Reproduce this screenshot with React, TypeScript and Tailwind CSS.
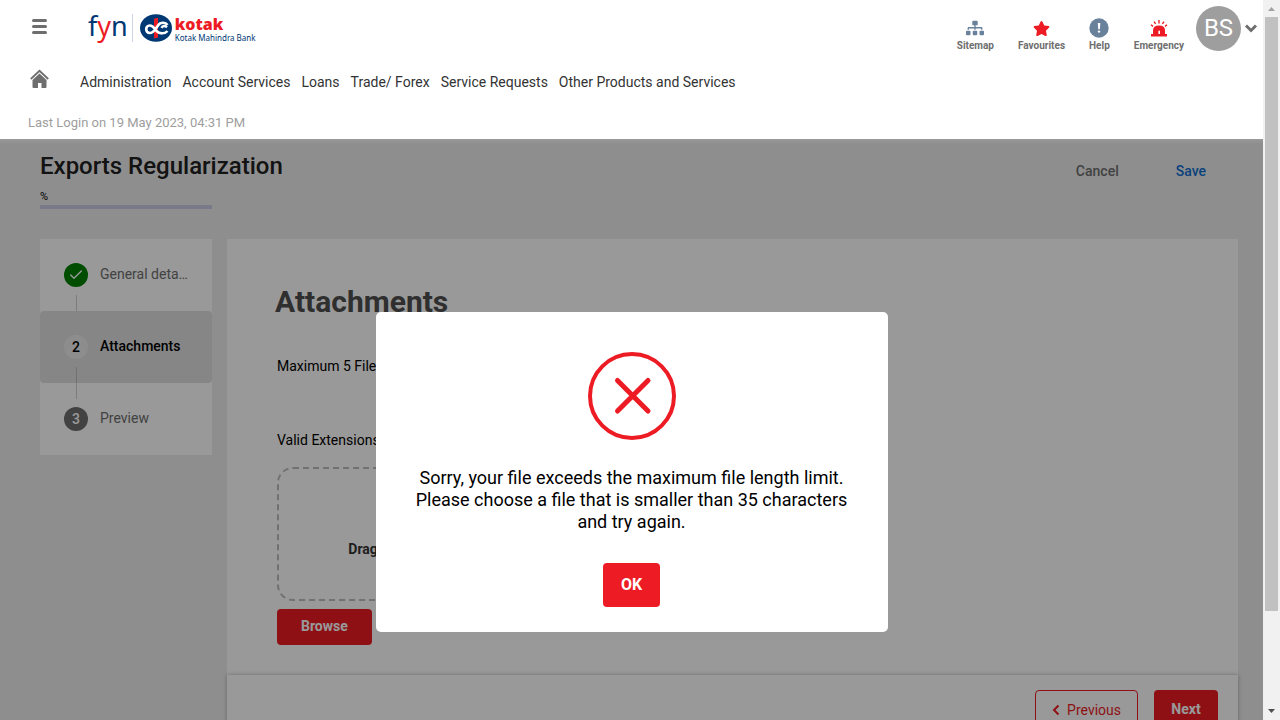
import { ReactNode } from "react";
import { Check } from "lucide-react";
import { FaSitemap, FaStar } from "react-icons/fa";

const menu = [
  "Administration",
  "Account Services",
  "Loans",
  "Trade/ Forex",
  "Service Requests",
  "Other Products and Services",
];

function Logo() {
  return (
    <a href="#home" aria-label="Kotak Mahindra Bank" className="flex h-8 items-center">
      <span className="pb-1 font-['Noto_Sans',sans-serif] text-[27px] leading-7 text-[#003874]">
        f<span className="text-[#ed1c24]">y</span>n
      </span>
      <span className="ml-1 h-7 w-px bg-[#ccd6e6]" />
      <svg viewBox="0 0 32 28" className="ml-[7px] h-7 w-8" aria-hidden="true">
        <ellipse cx="16" cy="14" rx="16" ry="13.8" fill="#003874" />
        <path d="M14 4.800 L18 3.800 V23.500 L14 24.500 Z" fill="#ed1c24" />
        <path
          d="M27.500 11 C25.500 8 20.500 8 18 11.500 C15.500 15 13.500 19 9.800 19 C5 19 5 11.500 9.800 11.500 C13.500 11.500 14.500 15 16.500 17 C19.500 20.200 25 20 27.500 17 M27 13.200 C25 11.400 22.800 11.600 21.500 13.800"
          fill="none"
          stroke="#fff"
          strokeWidth="2.600"
        />
      </svg>
      <span className="ml-[3px] flex flex-col gap-px">
        <span className="font-['Noto_Sans',sans-serif] text-[16px] leading-[18px] font-black text-[#ed1c24]">kotak</span>
        <span className="font-['Noto_Sans',sans-serif] text-[8px] leading-2 text-[#003874]">Kotak Mahindra Bank</span>
      </span>
    </a>
  );
}

function HomeIcon() {
  return (
    <svg viewBox="0 0 20 20" className="h-5 w-5" aria-hidden="true">
      <path d="M0.800 10 L9.500 1.800 L18.200 10" fill="none" stroke="#6e6e6e" strokeWidth="1.800" />
      <path d="M9.500 4.500 L16.500 11 V18 Q16.500 19 15.500 19 H11.500 V14 H8 V19 H3.500 Q2.500 19 2.500 18 V11 Z" fill="#6e6e6e" />
    </svg>
  );
}

function HelpIcon() {
  return (
    <svg viewBox="0 0 20 20" className="h-5 w-5" aria-hidden="true">
      <circle cx="10" cy="10" r="9.700" fill="#6a819c" />
      <path d="M8.800 5 H11.300 L10.900 11.300 H9.200 Z" fill="#fff" />
      <circle cx="10" cy="13.600" r="1.200" fill="#fff" />
    </svg>
  );
}

function SirenIcon() {
  return (
    <svg viewBox="0 0 18 18" className="h-[18px] w-[18px]" aria-hidden="true">
      <path d="M1 15 H17 V17.500 H1 Z" fill="#ed1c24" />
      <path d="M3 15.500 V11.500 Q3 6.500 9 6.500 Q15 6.500 15 11.500 V15.500 Z" fill="#ed1c24" />
      <path d="M8.400 15 V12.500 Q8.400 11.500 9.200 11.500 Q10 11.500 10 12.500 V15 Z" fill="#fff" />
      <path d="M9 1 V4.500 M5.600 4.800 L4 2.600 M12.400 4.800 L14 2.600 M3 7.400 L1 5.800 M15 7.400 L17 5.800" stroke="#ed1c24" strokeWidth="1.400" />
    </svg>
  );
}

function QuickLink({ label, children }: { label: string; children: ReactNode }) {
  return (
    <a href={"#" + label.toLowerCase()} className="flex flex-col items-center text-[10px] leading-3 font-bold text-[#6e6e6e]">
      <span className="flex h-6 items-center justify-center">{children}</span>
      {label}
    </a>
  );
}

function Header() {
  return (
    <header className="h-[139px] shrink-0 bg-white">
      <div className="flex h-[58px] items-start justify-between pl-8">
        <div className="flex items-start">
          <button aria-label="Menu" className="mt-[19px] flex w-[15px] flex-col gap-[3px]">
            <span className="h-[3px] w-full rounded-sm bg-[#6e6e6e]" />
            <span className="h-[3px] w-full rounded-sm bg-[#6e6e6e]" />
            <span className="h-[3px] w-full rounded-sm bg-[#6e6e6e]" />
          </button>
          <div className="mt-3 ml-[41px]">
            <Logo />
          </div>
        </div>
        <div className="flex items-start pr-[5px]">
          <nav aria-label="Quick links" className="mt-4 mr-3 flex gap-6">
            <QuickLink label="Sitemap"><FaSitemap size={18} color="#6a819c" /></QuickLink>
            <QuickLink label="Favourites"><FaStar size={17} color="#ed1c24" /></QuickLink>
            <QuickLink label="Help"><HelpIcon /></QuickLink>
            <QuickLink label="Emergency"><SirenIcon /></QuickLink>
          </nav>
          <button aria-label="Profile" className="mt-1.5 flex items-center gap-[3px]">
            <span className="flex size-[45px] items-center justify-center rounded-full bg-[#9e9e9e] pb-0.5 text-2xl text-white">BS</span>
            <svg viewBox="0 0 14 10" className="mb-0.5 h-2.5 w-3.5" aria-hidden="true">
              <path d="M2 2.500 L7 7.500 L12 2.500" fill="none" stroke="#6e6e6e" strokeWidth="3" />
            </svg>
          </button>
        </div>
      </div>
      <nav aria-label="Main" className="flex h-12 items-center pl-[30px] text-sm text-[#333]">
        <a href="#home" aria-label="Home" className="mr-[30px] mb-1.5"><HomeIcon /></a>
        <div className="flex gap-[11px]">
          {menu.map((item) => (
            <a key={item} href="#menu">{item}</a>
          ))}
        </div>
      </nav>
      <p className="pt-[9px] pl-7 text-[13px] leading-4 text-[#9e9e9e]">Last Login on 19 May 2023, 04:31 PM</p>
    </header>
  );
}

function Steps() {
  return (
    <ol className="bg-white text-sm text-[#6e6e6e]">
      <li className="relative flex h-18 items-center gap-3 px-6">
        <span className="flex size-6 shrink-0 items-center justify-center rounded-full bg-[#008000] text-white">
          <Check size={16} strokeWidth={2} />
        </span>
        <span className="truncate pb-0.5">General details</span>
        <span className="absolute bottom-0 left-9 h-4 w-px bg-[#d0d0d0]" />
      </li>
      <li className="relative flex h-18 items-center gap-3 rounded-sm bg-[#e0e0e0] px-6 font-medium text-black">
        <span className="flex size-6 shrink-0 items-center justify-center rounded-full bg-[#ebebeb]">2</span>
        <span className="pb-0.5">Attachments</span>
        <span className="absolute bottom-0 left-9 h-4 w-px bg-[#bdbdbd]" />
      </li>
      <li className="relative flex h-18 items-center gap-3 px-6">
        <span className="flex size-6 shrink-0 items-center justify-center rounded-full bg-[#6e6e6e] font-medium text-white">3</span>
        <span className="pb-0.5">Preview</span>
        <span className="absolute top-0 left-9 h-4 w-px bg-[#d0d0d0]" />
      </li>
    </ol>
  );
}

function AttachmentsPanel() {
  return (
    <section className="min-w-0 flex-1 bg-white">
      <div className="h-[436px] px-12 pt-[45px]">
        <h2 className="text-[30px] leading-9 font-bold text-[#4f4f4f]">Attachments</h2>
        <div className="px-0.5 text-sm">
          <p className="mt-9 leading-5">Maximum 5 Files</p>
          <p className="mt-[54px] leading-5">Valid Extensions</p>
          <div className="mt-[17px] flex h-[134px] w-[294px] items-center justify-center rounded-2xl border-2 border-dashed border-[#bdbdbd] pt-[30px] font-bold text-[#333]">
            Drag and Drop files here
          </div>
          <button className="mt-2 h-9 rounded bg-[#ed1c24] px-6 pb-0.5 font-bold text-white">Browse</button>
        </div>
      </div>
      <div className="flex justify-end gap-4 px-5 py-[15px] text-sm shadow-[0_0_4px_rgba(0,0,0,0.3)]">
        <button className="flex h-10 items-center gap-[7px] rounded border border-[#ed1c24] px-4 text-[#ed1c24]">
          <svg viewBox="0 0 8 12" className="h-3 w-2" aria-hidden="true">
            <path d="M6.500 1.500 L2 6 L6.500 10.500" fill="none" stroke="#ed1c24" strokeWidth="2" />
          </svg>
          Previous
        </button>
        <button className="h-10 w-16 rounded bg-[#ed1c24] pb-0.5 font-bold text-white">Next</button>
      </div>
    </section>
  );
}

function ErrorDialog() {
  return (
    <div className="absolute inset-0 flex items-start justify-center bg-black/40 pt-[173px]">
      <div role="alertdialog" aria-modal="true" aria-describedby="error-text" className="flex w-full max-w-lg flex-col items-center rounded-[5px] bg-white px-8 pt-10 pb-[25px]">
        <svg viewBox="0 0 88 88" className="size-22" aria-hidden="true">
          <circle cx="44" cy="44" r="42" fill="none" stroke="#ed1c24" strokeWidth="4" />
          <path d="M29.500 28.500 L60 59 M60 28.500 L29.500 59" stroke="#ed1c24" strokeWidth="5" strokeLinecap="round" />
        </svg>
        <p id="error-text" className="mt-[27px] text-center text-lg leading-[22px] text-black">
          Sorry, your file exceeds the maximum file length limit. Please choose a file that is smaller than 35 characters and try again.
        </p>
        <button className="mt-[30px] h-11 rounded bg-[#ed1c24] px-[18px] text-base font-bold text-white">OK</button>
      </div>
    </div>
  );
}

function ScrollTrack() {
  return (
    <div aria-hidden="true" className="flex w-[17px] shrink-0 flex-col items-center bg-[#f1f1f1]">
      <svg viewBox="0 0 17 17" className="size-[17px]"><path d="M5 11 L8.500 7 L12 11 Z" fill="#a3a3a3" /></svg>
      <div className="w-[13px] flex-[594] bg-[#c1c1c1]" />
      <div className="flex-[92]" />
      <svg viewBox="0 0 17 17" className="size-[17px]"><path d="M5 6 L8.500 10 L12 6 Z" fill="#505050" /></svg>
    </div>
  );
}

export default function App() {
  return (
    <div className="flex h-screen overflow-hidden font-[Roboto,sans-serif]">
      <div className="flex min-w-0 flex-1 flex-col">
        <Header />
        <main className="relative min-h-0 flex-1 overflow-hidden bg-[#ededed]">
          <div className="flex justify-between bg-[linear-gradient(#fff,#ededed_5px)] pr-[57px] pl-10">
            <div className="h-[100px]">
              <h1 className="pt-[11px] text-2xl font-medium text-[#212121]">Exports Regularization</h1>
              <label htmlFor="progress" className="mt-[7px] block text-[11px] leading-4">%</label>
              <progress id="progress" value={0} max={100} className="block h-1 w-[172px] appearance-none bg-[#c9cbe6] [&::-webkit-progress-bar]:bg-[#c9cbe6]" />
            </div>
            <div className="flex items-start gap-[57px] pt-[22px] text-sm font-medium">
              <button className="text-[#6e6e6e]">Cancel</button>
              <button className="text-[#0f6fd1]">Save</button>
            </div>
          </div>
          <div className="flex items-start gap-[15px] pr-[25px] pl-10">
            <div className="w-[172px] shrink-0"><Steps /></div>
            <AttachmentsPanel />
          </div>
          <ErrorDialog />
        </main>
      </div>
      <ScrollTrack />
    </div>
  );
}
